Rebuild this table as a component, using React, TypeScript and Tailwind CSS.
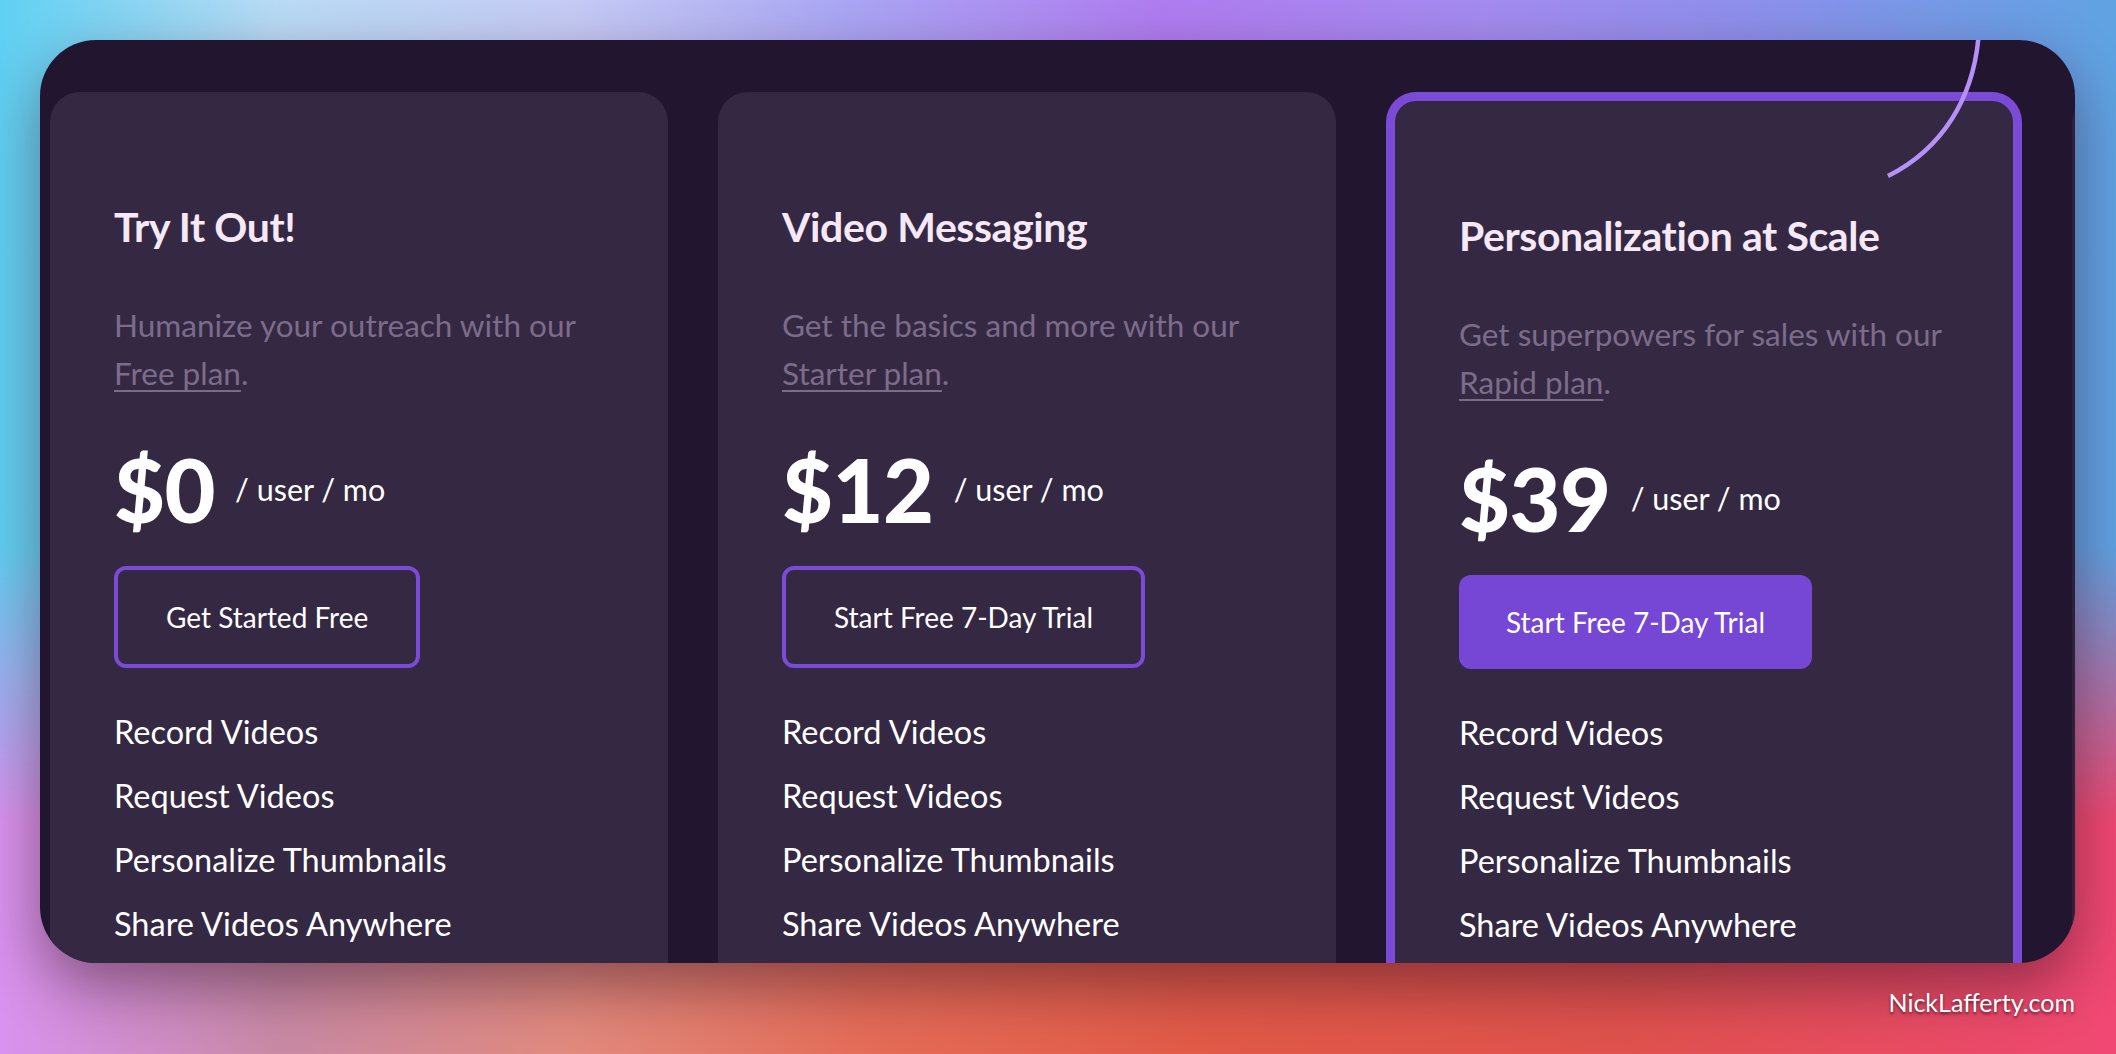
import React from "react";

type Plan = {
  title: string;
  blurb: string;
  link: string;
  price: string;
  cta: string;
  featured?: boolean;
};

const plans: Plan[] = [
  {
    title: "Try It Out!",
    blurb: "Humanize your outreach with our",
    link: "Free plan",
    price: "$0",
    cta: "Get Started Free",
  },
  {
    title: "Video Messaging",
    blurb: "Get the basics and more with our",
    link: "Starter plan",
    price: "$12",
    cta: "Start Free 7-Day Trial",
  },
  {
    title: "Personalization at Scale",
    blurb: "Get superpowers for sales with our",
    link: "Rapid plan",
    price: "$39",
    cta: "Start Free 7-Day Trial",
    featured: true,
  },
];

const features = [
  "Record Videos",
  "Request Videos",
  "Personalize Thumbnails",
  "Share Videos Anywhere",
];

function PlanCard({ plan }: { plan: Plan }) {
  return (
    <div
      className={`flex shrink-0 flex-col rounded-t-[30px] bg-[#352842] px-16 pt-[111px] ${
        plan.featured ? "w-[636px] border-[9px] border-b-0 border-[#7a4bd6]" : "w-[618px]"
      }`}
    >
      <h2 className="text-[41px] leading-[48px] font-bold tracking-[-0.4px] text-[#f5e9f8]">
        {plan.title}
      </h2>
      <p className="mt-[50px] text-[31.5px] leading-[48px] text-[#7c6c8b]">
        {plan.blurb}
        <br />
        <span className="underline decoration-2 underline-offset-[5px]">{plan.link}</span>.
      </p>
      <div className="mt-[49px] flex items-center gap-[20px]">
        <span className="text-[88px] leading-[86px] font-black tracking-[-0.5px] text-white">
          {plan.price}
        </span>
        <span className="text-[30.5px] leading-[34px] text-white">/ user / mo</span>
      </div>
      <div className="mt-[34px] flex">
        {plan.featured ? (
          <button className="h-[94px] rounded-[12px] bg-[#7647d5] px-[47px] text-[28px] text-white">
            {plan.cta}
          </button>
        ) : (
          <button className="h-[102px] rounded-[12px] border-4 border-[#7a4bd6] px-[48px] text-[28px] text-white">
            {plan.cta}
          </button>
        )}
      </div>
      <ul className="mt-[32px] flex flex-col">
        {features.map((f) => (
          <li key={f} className="text-[32.5px] leading-[64px] text-white">
            {f}
          </li>
        ))}
      </ul>
    </div>
  );
}

export default function App() {
  return (
    <div className="relative flex h-[1054px] w-full flex-col overflow-hidden bg-[linear-gradient(90deg,#d992ef_0%,#c98aa6_13%,#e28a7e_27%,#e56c58_41%,#e25a48_57%,#e0524e_77%,#f04873_100%)] pt-[40px] pr-[41px] pl-[40px] [font-family:Lato,'Noto_Sans',sans-serif] before:absolute before:inset-0 before:bg-[linear-gradient(90deg,#5fd0f2_0%,#b9dbf5_13%,#c6cbf5_27%,#aaa6f4_40%,#b07cf0_55%,#a48bf0_70%,#8d90ec_83%,#5fa3e2_100%)] before:content-[''] before:[mask-image:linear-gradient(180deg,#000_0%,#000_52%,transparent_78%)]">
      <div className="relative flex h-[923px] shrink-0 gap-[50px] overflow-hidden rounded-[56px] bg-[#211530] pt-[52px] pl-[10px] shadow-[0_24px_60px_rgba(40,10,30,0.45)]">
        {plans.map((p) => (
          <PlanCard key={p.title} plan={p} />
        ))}
        <div className="w-[618px] shrink-0 rounded-t-[30px] bg-[#2d2139]" />
        <svg
          className="pointer-events-none absolute inset-0 h-full w-full"
          viewBox="0 0 2035 923"
          fill="none"
        >
          <path
            d="M1939 -10 C1935 60 1900 110 1848 136"
            stroke="#b391f7"
            strokeWidth="4.5"
          />
        </svg>
      </div>
      <div className="relative flex justify-end pt-[24px]">
        <span className="text-[25px] leading-[30px] text-white [text-shadow:0_2px_3px_rgba(60,10,20,0.7)]">
          NickLafferty.com
        </span>
      </div>
    </div>
  );
}
